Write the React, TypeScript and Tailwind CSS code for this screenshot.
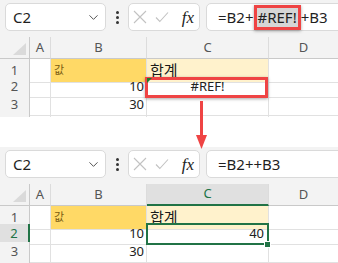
import { ChevronDown } from 'lucide-react'

const GRID = 'grid grid-cols-[30px_21px_96px_122px_1fr]'

function FormulaBar({ broken }: { broken: boolean }) {
  return (
    <div className="flex h-[37px] items-start overflow-hidden bg-[#f3f3f3] pl-[5px] pt-[3px]">
      <div className="flex h-[28px] w-[101px] shrink-0 items-center justify-between rounded-[5px] border border-[#dadada] bg-white pl-[7px] pr-[4px] text-[15px] text-[#1f1f1f]">
        C2
        <ChevronDown className="h-[15px] w-[15px] text-[#555]" strokeWidth={1.6} />
      </div>
      <div className="flex h-[28px] w-[22px] shrink-0 flex-col items-center justify-center gap-[2px]">
        <span className="h-[3px] w-[3px] rounded-full bg-[#333]" />
        <span className="h-[3px] w-[3px] rounded-full bg-[#333]" />
        <span className="h-[3px] w-[3px] rounded-full bg-[#333]" />
      </div>
      <div className="flex h-[28px] w-[72px] shrink-0 items-center rounded-[5px] border border-[#dadada] bg-white pl-[4px]">
        <svg width="14" height="14" viewBox="0 0 14 14" className="text-[#c2c2c2]">
          <path d="M1 1 13 13M13 1 1 13" stroke="currentColor" strokeWidth="1.1" fill="none" />
        </svg>
        <svg width="14" height="12" viewBox="0 0 14 12" className="ml-[8px] text-[#c2c2c2]">
          <path d="M1 6.5 4.8 10.5 13 1.5" stroke="currentColor" strokeWidth="1.1" fill="none" />
        </svg>
        <span className="ml-auto mr-[5px] font-['Liberation_Serif',serif] text-[17px] italic leading-none text-[#222]">
          fx
        </span>
      </div>
      <div className="-mr-[12px] ml-[6px] flex h-[28px] flex-1 items-center rounded-[5px] border border-[#dadada] bg-white pl-[11px] text-[15px] text-[#1f1f1f]">
        {broken ? (
          <>
            =B2+
            <span className="inline-flex h-[25px] items-center border-[3px] border-[#ef4444] bg-[#d6d6d6] px-[1px] shadow-[0_1px_3px_rgba(0,0,0,0.35)]">
              #REF!
            </span>
            +B3
          </>
        ) : (
          '=B2++B3'
        )}
      </div>
    </div>
  )
}

function Sheet({ after }: { after: boolean }) {
  return (
    <div className="text-[13px] text-[#222]">
      <div className={`${GRID} h-[22px] bg-[#f3f3f3] text-[#555]`}>
        <div className="flex items-end justify-end border-b border-r border-[#c9c9c9] pb-[3px] pr-[3px]">
          <svg width="13" height="12" viewBox="0 0 13 12">
            <polygon points="13,0 13,12 0,12" fill="#dadada" />
          </svg>
        </div>
        <div className="flex items-center justify-center border-b border-r border-b-[#c9c9c9] border-r-[#dcdcdc]">A</div>
        <div className="flex items-center justify-center border-b border-r border-b-[#c9c9c9] border-r-[#dcdcdc]">B</div>
        {after ? (
          <div className="flex items-center justify-center border-b-2 border-r border-b-[#217346] border-r-[#dcdcdc] bg-[#e0e0e0] text-[#217346]">
            C
          </div>
        ) : (
          <div className="flex items-center justify-center border-b border-r border-b-[#c9c9c9] border-r-[#dcdcdc]">C</div>
        )}
        <div className="flex items-center justify-center border-b border-b-[#c9c9c9]">D</div>
      </div>

      <div className={`${GRID} h-[18px]`}>
        <div className="flex items-center justify-center border-b border-r border-b-[#dedede] border-r-[#c9c9c9] bg-[#f3f3f3] text-[#555]">1</div>
        <div className="border-b border-r border-[#e1e1e1]" />
        <div className="flex items-center border-b border-r border-[#e1e1e1] bg-[#ffd966] pl-[3px] text-[11px] text-[#7a5c12]">
          값
        </div>
        <div className="flex items-center border-b border-r border-[#e1e1e1] bg-[#fff2cc] pl-[3px] text-[15px] text-[#1a1a1a]">
          합계
        </div>
        <div className="border-b border-[#e1e1e1]" />
      </div>

      <div className={`${GRID} h-[18px]`}>
        {after ? (
          <div className="flex items-center justify-center border-b border-r-2 border-b-[#dedede] border-r-[#217346] bg-[#e0e0e0] text-[#217346]">
            2
          </div>
        ) : (
          <div className="flex items-center justify-center border-b border-r border-b-[#dedede] border-r-[#c9c9c9] bg-[#f3f3f3] text-[#555]">2</div>
        )}
        <div className="border-b border-r border-[#e1e1e1]" />
        <div className="flex items-center justify-end border-b border-r border-[#e1e1e1] pr-[2px]">10</div>
        {after ? (
          <div className="relative flex items-center justify-end border-b border-r border-[#e1e1e1] pr-[4px]">
            40
            <span className="absolute -left-[1px] -top-[1px] -bottom-[1px] right-[-1px] z-10 border-2 border-[#217346]" />
            <span className="absolute -bottom-[4px] -right-[3px] z-20 h-[7px] w-[7px] border border-white bg-[#217346]" />
          </div>
        ) : (
          <div className="relative flex items-center justify-center border-b border-r border-[#e1e1e1]">
            #REF!
            <span className="absolute -left-[2px] top-0 -bottom-[1px] right-0 z-10 border-[3px] border-[#ef4444] shadow-[0_1px_3px_rgba(0,0,0,0.35)]" />
            <svg width="5" height="5" viewBox="0 0 5 5" className="absolute left-0 top-[1px] z-20">
              <polygon points="0,0 5,0 0,5" fill="#1e7a2e" />
            </svg>
          </div>
        )}
        <div className="border-b border-[#e1e1e1]" />
      </div>

      <div className={`${GRID} h-[18px]`}>
        <div className="flex items-center justify-center border-b border-r border-b-[#dedede] border-r-[#c9c9c9] bg-[#f3f3f3] text-[#555]">3</div>
        <div className="border-b border-r border-[#e1e1e1]" />
        <div className="flex items-center justify-end border-b border-r border-[#e1e1e1] pr-[2px]">30</div>
        <div className="border-b border-r border-[#e1e1e1]" />
        <div className="border-b border-[#e1e1e1]" />
      </div>

      <div className={`${GRID} h-[18px]`}>
        <div className="flex items-center justify-center border-r border-[#c9c9c9] bg-[#f3f3f3] text-[#555]">4</div>
        <div className="border-r border-[#e1e1e1]" />
        <div className="border-r border-[#e1e1e1]" />
        <div className="border-r border-[#e1e1e1]" />
        <div />
      </div>
    </div>
  )
}

export default function App() {
  return (
    <div className="relative h-[263px] w-[338px] overflow-hidden bg-white font-['Noto_Sans','Noto_Sans_CJK_KR',sans-serif]">
      <div className="h-[117px] overflow-hidden">
        <FormulaBar broken />
        <Sheet after={false} />
      </div>
      <div className="h-[30px]" />
      <FormulaBar broken={false} />
      <Sheet after />

      <svg width="13" height="52" viewBox="0 0 13 52" className="absolute left-[195px] top-[98px] z-30">
        <line x1="6.5" y1="3" x2="6.5" y2="40" stroke="#ef4444" strokeWidth="3" />
        <polygon points="1,37 12,37 6.5,51" fill="#ef4444" />
      </svg>
    </div>
  )
}
